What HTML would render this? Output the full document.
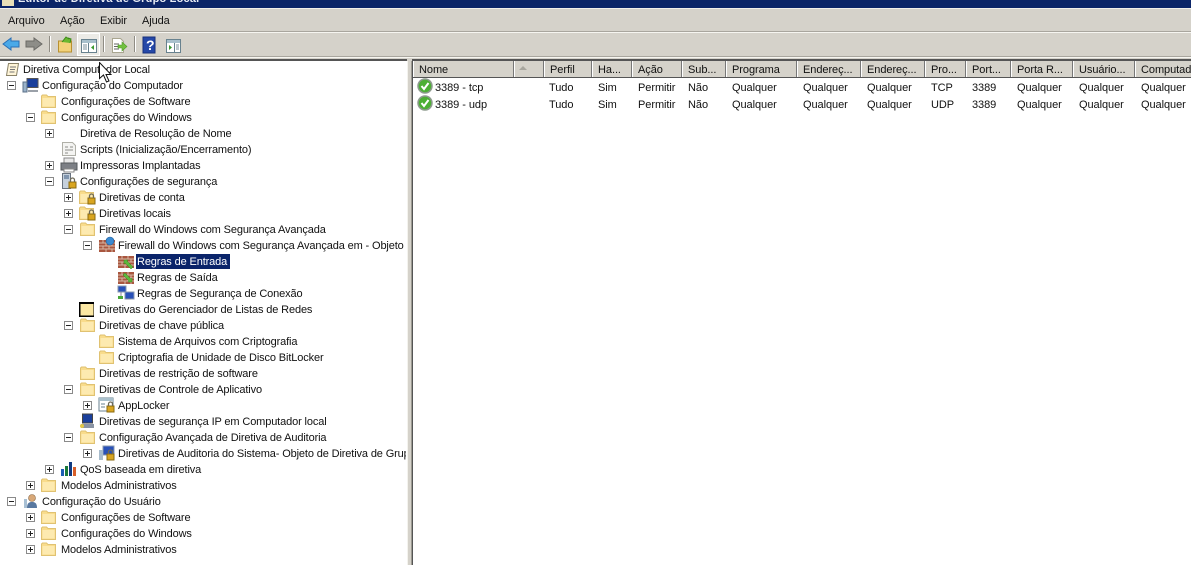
<!DOCTYPE html>
<html lang="pt"><head><meta charset="utf-8"><title>Editor de Diretiva de Grupo Local</title>
<style>
html,body{margin:0;padding:0;width:1191px;height:565px;overflow:hidden;background:#d5d2ca}
body{position:relative;font:11px/16px "Liberation Sans",sans-serif;color:#111;letter-spacing:-.1px}
.a{position:absolute;white-space:nowrap}
#tree{position:absolute;left:0;top:61px;width:407px;height:504px;background:#fff;overflow:hidden;letter-spacing:-.13px}
#list{position:absolute;left:413px;top:61px;width:778px;height:504px;background:#fff;overflow:hidden;letter-spacing:-.06px}
.t{position:absolute;white-space:nowrap;height:16px;line-height:18px}
.x{position:absolute;width:7px;height:7px;border:1px solid #8a8a8a;background:#fff}
.x:before{content:"";position:absolute;left:1px;top:3px;width:5px;height:1px;background:#222}
.p:after{content:"";position:absolute;left:3px;top:1px;width:1px;height:5px;background:#222}
svg.i{position:absolute;width:18px;height:16px;overflow:visible}
.h{position:absolute;top:0;height:16px;background:#d5d2ca;border-left:1px solid #fff;border-right:1px solid #777;box-sizing:border-box;line-height:18px;padding-left:5px;white-space:nowrap;overflow:hidden}
.c{position:absolute;white-space:nowrap;line-height:18px;height:16px}
</style></head><body>
<svg width="0" height="0" style="position:absolute"><defs>
<symbol id="f" viewBox="0 0 18 16"><path d="M.5 14.500V3l1-1h4l1.500 1.500h7.500v11z" fill="#f9dc8c" stroke="#e0c272"/><path d="M1.500 5h12v8.500h-12z" fill="#fdeab0"/></symbol>
<symbol id="k" viewBox="0 0 18 16"><rect x="9" y="9" width="7" height="6" fill="#d9a520" stroke="#8a6a10"/><path d="M10.500 9V7a2 2 0 0 1 4 0v2" fill="none" stroke="#6e6a58" stroke-width="1.300"/></symbol>
<symbol id="b" viewBox="0 0 18 16"><path d="M1 3h16v12H1z" fill="#a9563f"/><path d="M1 6h16M1 9h16M1 12h16M5 3v3M11 3v3M8 6v3M14 6v3M5 9v3M11 9v3M8 12v3M14 12v3" stroke="#d8b8a4"/></symbol>
<symbol id="ok" viewBox="0 0 16 16"><circle cx="8" cy="8" r="7" fill="#4caf34" stroke="#8d9a8d" stroke-width="1.500"/><path d="M4.500 8l2.500 3 4.500-6" fill="none" stroke="#fff" stroke-width="2"/></symbol>
</defs></svg>

<div class="a" style="left:0;top:0;width:1191px;height:8px;background:#0b2568;overflow:hidden">
 <div class="a" style="left:18px;top:-8px;color:#e8ecf4;font-weight:bold;font-size:11px;line-height:14px;letter-spacing:.2px">Editor de Diretiva de Grupo Local</div>
 <div class="a" style="left:2px;top:0;width:12px;height:6px;background:#e8dfb8"></div>
</div>
<div class="a" style="left:0;top:8px;width:1191px;height:1px;background:#f2f0ea"></div>
<div class="a" style="left:8px;top:13px">Arquivo</div>
<div class="a" style="left:60px;top:13px">Ação</div>
<div class="a" style="left:100px;top:13px">Exibir</div>
<div class="a" style="left:142px;top:13px">Ajuda</div>
<div class="a" style="left:0;top:31px;width:1191px;height:1px;background:#a9a69e"></div>
<div class="a" style="left:0;top:32px;width:1191px;height:1px;background:#f6f5f0"></div>

<svg class="a" style="left:0;top:33px" width="192" height="24" viewBox="0 0 192 24">
 <path d="M3 11l8-6v3h8v6h-8v3z" fill="#4aa9e8" stroke="#2a6fb5"/>
 <path d="M42 11l-8-6v3h-8v6h8v3z" fill="#8d8d88" stroke="#6a6a66"/>
 <path d="M49.500 3v16M103.500 3v16M134.500 3v16" stroke="#8f8c84"/><path d="M50.500 3v16M104.500 3v16M135.500 3v16" stroke="#fff"/>
 <path d="M58.500 19V8h13v11z" fill="#f2d27a" stroke="#b89030"/><path d="M62 9l4-5 3 2-1-1 3 1-1 4" fill="#6ab830" stroke="#3c8a18"/>
 <rect x="77.500" y="0.500" width="22" height="22" fill="#ecebe6" stroke="#fff"/>
 <rect x="81.500" y="6.500" width="15" height="13" fill="#fff" stroke="#68828f"/><path d="M82 7h14v3H82z" fill="#a9c0cc"/><path d="M88.500 10v9" stroke="#68828f"/><path d="M83 12h4M83 14h4M83 16h4" stroke="#7c919c"/><path d="M94 12v5l-3-2.500z" fill="#3c9a30"/>
 <path d="M112.500 5.500h8l3 3v11h-11z" fill="#fff" stroke="#a9a690"/><path d="M114 11h5M114 13.500h5M114 16h5" stroke="#666"/><path d="M118 12h4v-3l5 4.500-5 4.500v-3h-4z" fill="#72c040" stroke="#4e9c28" stroke-width=".6"/>
 <rect x="143" y="4" width="12" height="16" fill="#2548a8" stroke="#16307c"/>
 <rect x="166.500" y="6.500" width="14" height="13" fill="#fff" stroke="#68828f"/><path d="M167 7h13v3h-13z" fill="#a9c0cc"/><path d="M174.500 10v9" stroke="#68828f"/><path d="M176 12h3M176 14h3M176 16h3" stroke="#7c919c"/><path d="M169 12v5l3-2.500z" fill="#3c9a30"/>
 <text x="146" y="17" font-family="Liberation Sans" font-size="14" font-weight="bold" fill="#fff">?</text>
</svg>

<div class="a" style="left:0;top:56px;width:1191px;height:1px;background:#a9a69e"></div>
<div class="a" style="left:0;top:57px;width:1191px;height:1px;background:#f6f5f0"></div>
<div class="a" style="left:0;top:59px;width:407px;height:2px;background:#555"></div>
<div class="a" style="left:413px;top:59px;width:778px;height:2px;background:#555"></div>
<div class="a" style="left:412px;top:59px;width:2px;height:506px;background:#555"></div>
<div class="a" style="left:407px;top:61px;width:1px;height:504px;background:#f4f3ee"></div>
<div class="a" style="left:411px;top:61px;width:1px;height:504px;background:#9c9a92"></div>

<div id="tree">
<svg class="i" style="left:4px;top:0" viewBox="0 0 18 16"><path d="M4.500 2.500h10l-2 12h-10z" fill="#fff5d8" stroke="#8a8268"/><path d="M6 6h6M6 8.500h5M5.500 11h5" stroke="#777"/></svg>
<div class="t" style="left:23px;top:0">Diretiva Computador Local</div>

<div class="x" style="left:7px;top:20px"></div>
<svg class="i" style="left:22px;top:16px" viewBox="0 0 18 16"><rect x="5" y="1.500" width="11" height="9" fill="#1a3f9c" stroke="#555"/><path d="M1 5h4v10H1z" fill="#9ab2c8" stroke="#5b7088"/><path d="M6 13h10v2H6z" fill="#9aa0a8"/></svg>
<div class="t" style="left:42px;top:16px">Configuração do Computador</div>

<svg class="i" style="left:41px;top:32px"><use href="#f"/></svg>
<div class="t" style="left:61px;top:32px">Configurações de Software</div>

<div class="x" style="left:26px;top:52px"></div>
<svg class="i" style="left:41px;top:48px"><use href="#f"/></svg>
<div class="t" style="left:61px;top:48px">Configurações do Windows</div>

<div class="x p" style="left:45px;top:68px"></div>
<div class="t" style="left:80px;top:64px">Diretiva de Resolução de Nome</div>

<svg class="i" style="left:60px;top:80px" viewBox="0 0 18 16"><path d="M2.500 1.500h10l3 3v10h-13z" fill="#f4f4f2" stroke="#b0b0a8"/><path d="M5 6h3M10 6h3M5 9h8M5 12h3" stroke="#8b8b88"/></svg>
<div class="t" style="left:80px;top:80px">Scripts (Inicialização/Encerramento)</div>

<div class="x p" style="left:45px;top:100px"></div>
<svg class="i" style="left:60px;top:96px" viewBox="0 0 18 16"><rect x="4" y="1" width="10" height="5" fill="#e8e8e8" stroke="#888"/><rect x="1" y="6" width="16" height="7" fill="#7c7f85" stroke="#55585c"/><rect x="4" y="12" width="10" height="3" fill="#fff" stroke="#888"/></svg>
<div class="t" style="left:80px;top:96px">Impressoras Implantadas</div>

<div class="x" style="left:45px;top:116px"></div>
<svg class="i" style="left:60px;top:112px" viewBox="0 0 18 16"><rect x="2.500" y="0.500" width="8" height="15" fill="#c5d0dc" stroke="#68727e"/><path d="M4 3h5M4 5h5" stroke="#3a5a80"/><use href="#k"/></svg>
<div class="t" style="left:80px;top:112px">Configurações de segurança</div>

<div class="x p" style="left:64px;top:132px"></div>
<svg class="i" style="left:79px;top:128px"><use href="#f"/><use href="#k"/></svg>
<div class="t" style="left:99px;top:128px">Diretivas de conta</div>

<div class="x p" style="left:64px;top:148px"></div>
<svg class="i" style="left:79px;top:144px"><use href="#f"/><use href="#k"/></svg>
<div class="t" style="left:99px;top:144px">Diretivas locais</div>

<div class="x" style="left:64px;top:164px"></div>
<svg class="i" style="left:80px;top:160px"><use href="#f"/></svg>
<div class="t" style="left:99px;top:160px">Firewall do Windows com Segurança Avançada</div>

<div class="x" style="left:83px;top:180px"></div>
<svg class="i" style="left:98px;top:176px" viewBox="0 0 18 16"><use href="#b"/><circle cx="12" cy="4" r="4" fill="#3b8ad0" stroke="#1f5c9a" stroke-width=".6"/></svg>
<div class="t" style="left:118px;top:176px">Firewall do Windows com Segurança Avançada em - Objeto</div>

<svg class="i" style="left:117px;top:192px" viewBox="0 0 18 16"><use href="#b"/><path d="M16 14l-6-6 1-1-4 0 0 4 1-1 6 6z" fill="#5cb83a" stroke="#3a8a20" stroke-width=".5"/></svg>
<div class="a" style="left:136px;top:193px;width:94px;height:15px;background:#0a246a"></div>
<div class="t" style="left:137px;top:192px;color:#fff">Regras de Entrada</div>

<svg class="i" style="left:117px;top:208px" viewBox="0 0 18 16"><use href="#b"/><path d="M8 4l6 6 1-1 0 4-4 0 1-1-6-6z" fill="#5cb83a" stroke="#3a8a20" stroke-width=".5"/></svg>
<div class="t" style="left:137px;top:208px">Regras de Saída</div>

<svg class="i" style="left:117px;top:224px" viewBox="0 0 18 16"><rect x="1" y="1" width="8" height="6" fill="#2850b8" stroke="#8898b0"/><rect x="8" y="7" width="9" height="7" fill="#2850b8" stroke="#8898b0"/><path d="M4 7v5M9 14h5" stroke="#889"/><rect x="1" y="11" width="5" height="3" fill="#4aa838"/></svg>
<div class="t" style="left:137px;top:224px">Regras de Segurança de Conexão</div>

<svg class="i" style="left:79px;top:240px" viewBox="0 0 18 16"><path d="M0 1h15v15H0z" fill="#000"/><path d="M1.500 3h13v11.500h-13z" fill="#fbe7a3"/></svg>
<div class="t" style="left:99px;top:240px">Diretivas do Gerenciador de Listas de Redes</div>

<div class="x" style="left:64px;top:260px"></div>
<svg class="i" style="left:80px;top:256px"><use href="#f"/></svg>
<div class="t" style="left:99px;top:256px">Diretivas de chave pública</div>

<svg class="i" style="left:99px;top:272px"><use href="#f"/></svg>
<div class="t" style="left:118px;top:272px">Sistema de Arquivos com Criptografia</div>

<svg class="i" style="left:99px;top:288px"><use href="#f"/></svg>
<div class="t" style="left:118px;top:288px">Criptografia de Unidade de Disco BitLocker</div>

<svg class="i" style="left:80px;top:304px"><use href="#f"/></svg>
<div class="t" style="left:99px;top:304px">Diretivas de restrição de software</div>

<div class="x" style="left:64px;top:324px"></div>
<svg class="i" style="left:80px;top:320px"><use href="#f"/></svg>
<div class="t" style="left:99px;top:320px">Diretivas de Controle de Aplicativo</div>

<div class="x p" style="left:83px;top:340px"></div>
<svg class="i" style="left:98px;top:336px" viewBox="0 0 18 16"><rect x="1" y="1" width="14" height="13" fill="#fff" stroke="#68828f"/><path d="M1 1h14v3H1z" fill="#a9c0cc"/><path d="M3 7h4M3 10h4" stroke="#68828f"/><use href="#k"/></svg>
<div class="t" style="left:118px;top:336px">AppLocker</div>

<svg class="i" style="left:79px;top:352px" viewBox="0 0 18 16"><rect x="3.500" y="1" width="10" height="9" fill="#1a3f9c" stroke="#444"/><path d="M2 11h13v4H2z" fill="#8a94a4"/><circle cx="3" cy="13" r="2" fill="#e2c848"/></svg>
<div class="t" style="left:99px;top:352px">Diretivas de segurança IP em Computador local</div>

<div class="x" style="left:64px;top:372px"></div>
<svg class="i" style="left:80px;top:368px"><use href="#f"/></svg>
<div class="t" style="left:99px;top:368px">Configuração Avançada de Diretiva de Auditoria</div>

<div class="x p" style="left:83px;top:388px"></div>
<svg class="i" style="left:98px;top:384px" viewBox="0 0 18 16"><rect x="5" y="1" width="11" height="9" fill="#2850b8" stroke="#8898b0"/><path d="M1 5h4v10H1z" fill="#a8bccc"/><use href="#k"/></svg>
<div class="t" style="left:118px;top:384px;width:288px;overflow:hidden">Diretivas de Auditoria do Sistema- Objeto de Diretiva de Grupo</div>

<div class="x p" style="left:45px;top:404px"></div>
<svg class="i" style="left:60px;top:400px" viewBox="0 0 18 16"><path d="M1 8h3v7H1z" fill="#1c5cb4"/><path d="M5 5h3v10H5z" fill="#1a7a3a"/><path d="M9 1h3v14H9z" fill="#0f3a80"/><path d="M13 6h3v9h-3z" fill="#d8602a"/></svg>
<div class="t" style="left:80px;top:400px">QoS baseada em diretiva</div>

<div class="x p" style="left:26px;top:420px"></div>
<svg class="i" style="left:41px;top:416px"><use href="#f"/></svg>
<div class="t" style="left:61px;top:416px">Modelos Administrativos</div>

<div class="x" style="left:7px;top:436px"></div>
<svg class="i" style="left:22px;top:432px" viewBox="0 0 18 16"><circle cx="10" cy="5" r="3.500" fill="#d8a878" stroke="#8a6a48" stroke-width=".6"/><path d="M5 15c0-5 2-6 5-6s5 1 5 6z" fill="#5878a0"/><path d="M2 6h3v9H2z" fill="#a8c0d4"/></svg>
<div class="t" style="left:42px;top:432px">Configuração do Usuário</div>

<div class="x p" style="left:26px;top:452px"></div>
<svg class="i" style="left:41px;top:448px"><use href="#f"/></svg>
<div class="t" style="left:61px;top:448px">Configurações de Software</div>

<div class="x p" style="left:26px;top:468px"></div>
<svg class="i" style="left:41px;top:464px"><use href="#f"/></svg>
<div class="t" style="left:61px;top:464px">Configurações do Windows</div>

<div class="x p" style="left:26px;top:484px"></div>
<svg class="i" style="left:41px;top:480px"><use href="#f"/></svg>
<div class="t" style="left:61px;top:480px">Modelos Administrativos</div>
</div>

<svg class="a" style="left:99px;top:62px" width="13" height="22" viewBox="0 0 13 22"><path d="M.5.5v16l4-3.500 3 7 2.500-1-3-6.500 5 0z" fill="#fff" stroke="#111"/></svg>

<div id="list">
<div class="a" style="left:0;top:0;width:778px;height:17px;background:#555"></div>
<div class="h" style="left:0;width:101px">Nome</div>
<div class="h" style="left:101px;width:30px"><svg width="10" height="16" style="position:absolute;left:3px;top:0"><path d="M1 9l4-4 4 4z" fill="#a8a69e"/></svg></div>
<div class="h" style="left:131px;width:48px">Perfil</div>
<div class="h" style="left:179px;width:40px">Ha...</div>
<div class="h" style="left:219px;width:50px">Ação</div>
<div class="h" style="left:269px;width:44px">Sub...</div>
<div class="h" style="left:313px;width:71px">Programa</div>
<div class="h" style="left:384px;width:64px">Endereç...</div>
<div class="h" style="left:448px;width:64px">Endereç...</div>
<div class="h" style="left:512px;width:41px">Pro...</div>
<div class="h" style="left:553px;width:45px">Port...</div>
<div class="h" style="left:598px;width:62px">Porta R...</div>
<div class="h" style="left:660px;width:62px">Usuário...</div>
<div class="h" style="left:722px;width:60px">Computador</div>

<svg class="a" style="left:4px;top:17px" width="16" height="16"><use href="#ok"/></svg>
<div class="c" style="left:22px;top:18px">3389 - tcp</div>
<div class="c" style="left:136px;top:18px">Tudo</div>
<div class="c" style="left:185px;top:18px">Sim</div>
<div class="c" style="left:225px;top:18px">Permitir</div>
<div class="c" style="left:275px;top:18px">Não</div>
<div class="c" style="left:319px;top:18px">Qualquer</div>
<div class="c" style="left:390px;top:18px">Qualquer</div>
<div class="c" style="left:454px;top:18px">Qualquer</div>
<div class="c" style="left:518px;top:18px">TCP</div>
<div class="c" style="left:559px;top:18px">3389</div>
<div class="c" style="left:604px;top:18px">Qualquer</div>
<div class="c" style="left:666px;top:18px">Qualquer</div>
<div class="c" style="left:728px;top:18px">Qualquer</div>

<svg class="a" style="left:4px;top:34px" width="16" height="16"><use href="#ok"/></svg>
<div class="c" style="left:22px;top:35px">3389 - udp</div>
<div class="c" style="left:136px;top:35px">Tudo</div>
<div class="c" style="left:185px;top:35px">Sim</div>
<div class="c" style="left:225px;top:35px">Permitir</div>
<div class="c" style="left:275px;top:35px">Não</div>
<div class="c" style="left:319px;top:35px">Qualquer</div>
<div class="c" style="left:390px;top:35px">Qualquer</div>
<div class="c" style="left:454px;top:35px">Qualquer</div>
<div class="c" style="left:518px;top:35px">UDP</div>
<div class="c" style="left:559px;top:35px">3389</div>
<div class="c" style="left:604px;top:35px">Qualquer</div>
<div class="c" style="left:666px;top:35px">Qualquer</div>
<div class="c" style="left:728px;top:35px">Qualquer</div>
</div>
</body></html>
